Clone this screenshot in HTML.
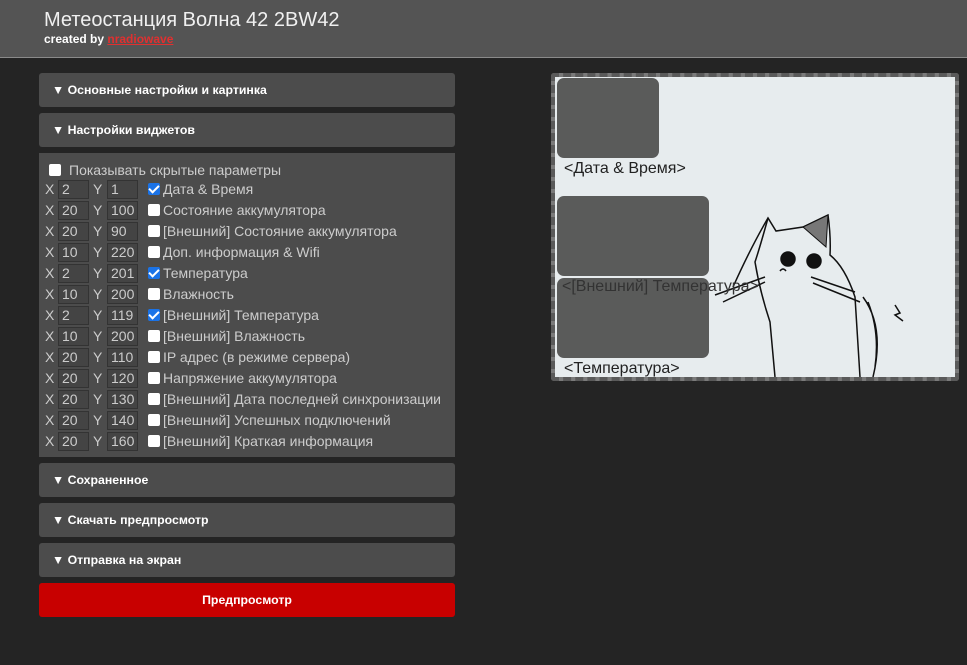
<!DOCTYPE html>
<html><head><meta charset="utf-8"><style>
*{box-sizing:border-box;margin:0;padding:0}
body{width:967px;height:665px;background:#242424;font-family:"Liberation Sans",Arial,sans-serif;position:relative;overflow:hidden}
.hdr{position:absolute;left:0;top:0;width:967px;height:58px;background:#545454;border-bottom:1px solid #8a8a8a}
.hdr h1{position:absolute;left:44px;top:9px;font-size:20px;font-weight:normal;color:#f0f0f0}
.hdr .by{position:absolute;left:44px;top:32px;font-size:12px;font-weight:bold;color:#fff}
.hdr .by a{color:#e03030;text-decoration:underline}
.sec{position:absolute;left:39px;width:416px;height:34px;background:#4c4c4c;border-radius:3px;color:#fff;font-size:12.3px;font-weight:bold;padding-left:13px;line-height:34px}
.panel{position:absolute;left:39px;top:153px;width:416px;height:304px;background:#4c4c4c}
.row{position:absolute;left:6px;height:20px;font-size:14px;color:#ccc;white-space:nowrap}
.row .l{position:absolute;top:1px}
.inp{position:absolute;top:0;width:31px;height:19px;background:#444;border:1px solid #333;color:#ccc;font-size:14px;padding-left:3px;line-height:17px}
.cb{position:absolute;top:3px;width:12px;height:12px;background:#fff;border-radius:2px}
.cb.on{background:#1a73e8}
.cb.on:after{content:"";position:absolute;left:3px;top:0px;width:4px;height:8px;border:solid #fff;border-width:0 2px 2px 0;transform:rotate(45deg)}
.btn{position:absolute;left:39px;top:583px;width:416px;height:34px;background:#c80000;border-radius:3px;color:#fff;font-size:12.3px;font-weight:bold;text-align:center;line-height:34px}
.prev{position:absolute;left:551px;top:73px;width:408px;height:308px;background:#e7ecee;background-clip:padding-box;border:4px dashed #5a5a5a;border-radius:3px}
.prevbg{position:absolute;left:551px;top:73px;width:408px;height:308px;background:#7a7a7a;border-radius:3px}
.w{position:absolute;background:#5a5b5a;border-radius:7px}
.pt{position:absolute;font-size:16px;color:#222;white-space:nowrap}
</style></head><body>
<div class="hdr"><h1>Метеостанция Волна 42 2BW42</h1><div class="by">created by <a>nradiowave</a></div></div>
<div class="sec" style="top:73px">▼ Основные настройки и картинка</div>
<div class="sec" style="top:113px">▼ Настройки виджетов</div>
<div class="panel">
<div class="row" style="top:8px;left:10px"><div class="cb" style="left:0"></div><span class="l" style="left:20px">Показывать скрытые параметры</span></div>
</div>
<div id="rows"></div>
<div class="sec" style="top:463px">▼ Сохраненное</div>
<div class="sec" style="top:503px">▼ Скачать предпросмотр</div>
<div class="sec" style="top:543px">▼ Отправка на экран</div>
<div class="btn">Предпросмотр</div>
<div class="prevbg"></div>
<div class="prev">
<div class="w" style="left:2px;top:1px;width:102px;height:80px"></div>
<div class="pt" style="left:9px;top:83px">&lt;Дата &amp; Время&gt;</div>
<div class="w" style="left:2px;top:119px;width:152px;height:80px"></div>
<div class="w" style="left:2px;top:201px;width:152px;height:80px"></div>
<svg style="position:absolute;left:0;top:0" width="400" height="300" fill="none" stroke="#111" stroke-width="1.5">
<path d="M178 210 Q196 170 213 141 L221 154 L248 150 L273 138 Q276 160 275 178 Q290 190 300 220 L305 300"/>
<path d="M213 141 Q205 170 200 185 Q205 215 215 245 L220 300"/>
<path d="M248 150 L273 138 L271 170 Z" fill="#777" stroke-width="1"/>
<circle cx="233" cy="182" r="7" fill="#111"/><circle cx="259" cy="184" r="7" fill="#111"/>
<path d="M225 194 Q228 190 231 194"/>
<path d="M160 218 L210 200 M168 225 L210 205 M256 200 L300 215 M258 206 L305 225"/>
<path d="M308 220 Q330 250 318 300 M313 225 Q325 255 320 290"/>
<path d="M340 228 L345 236 L340 238 L348 244"/>
</svg>
<div class="pt" style="left:7px;top:201px;color:#333">&lt;[Внешний] Температура&gt;</div>
<div class="pt" style="left:9px;top:283px">&lt;Температура&gt;</div>
</div>
<script>
var d=[[2,1,1,"Дата &amp; Время"],[20,100,0,"Состояние аккумулятора"],[20,90,0,"[Внешний] Состояние аккумулятора"],[10,220,0,"Доп. информация &amp; Wifi"],[2,201,1,"Температура"],[10,200,0,"Влажность"],[2,119,1,"[Внешний] Температура"],[10,200,0,"[Внешний] Влажность"],[20,110,0,"IP адрес (в режиме сервера)"],[20,120,0,"Напряжение аккумулятора"],[20,130,0,"[Внешний] Дата последней синхронизации"],[20,140,0,"[Внешний] Успешных подключений"],[20,160,0,"[Внешний] Краткая информация"]];
var h="";d.forEach(function(r,i){var t=180+i*21;
h+='<div class="row" style="left:45px;top:'+t+'px;width:410px"><span class="l" style="left:0">X</span><div class="inp" style="left:13px">'+r[0]+'</div><span class="l" style="left:48px">Y</span><div class="inp" style="left:62px">'+r[1]+'</div><div class="cb'+(r[2]?' on':'')+'" style="left:103px"></div><span class="l" style="left:118px">'+r[3]+'</span></div>';});
document.getElementById("rows").innerHTML=h;
</script>
</body></html>
